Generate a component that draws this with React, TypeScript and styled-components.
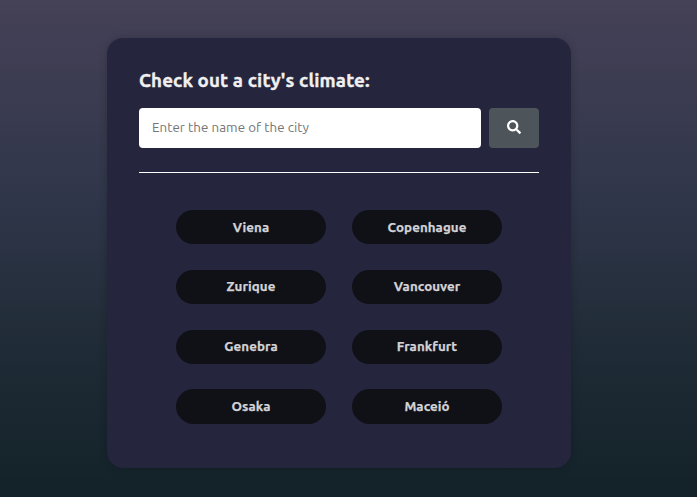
import React from "react";
import styled, { createGlobalStyle } from "styled-components";
import { FaSearch } from "react-icons/fa";

const GlobalStyle = createGlobalStyle`
  * { box-sizing: border-box; margin: 0; padding: 0; }
  body { font-family: Ubuntu, "Noto Sans", "Open Sans", sans-serif; }
`;

const Page = styled.main`
  height: 497px;
  padding: 38px 126px 29px 107px;
  background: linear-gradient(to bottom, #454157, #30364a 40%, #1f2b36 70%, #132229);
`;

const Card = styled.section`
  width: 464px;
  height: 430px;
  padding: 32px;
  border-radius: 16px;
  background: #25253d;
  box-shadow: 0 0 8px rgba(0, 0, 0, 0.2);
`;

const Title = styled.h1`
  height: 22px;
  line-height: 21px;
  font-size: 18.72px;
  font-weight: 700;
  letter-spacing: 0.14px;
  -webkit-text-stroke: 0.35px #f0f0f0;
  color: #f0f0f0;
  white-space: nowrap;
`;

const SearchForm = styled.form`
  display: flex;
  gap: 8px;
  margin-top: 16px;
  padding-bottom: 24px;
  border-bottom: 1px solid #fff;
`;

const CityInput = styled.input`
  width: 342px;
  height: 40px;
  padding: 0 13px 1px;
  border: 0;
  border-radius: 4px;
  background: #fff;
  font: 13.333px Ubuntu, "Noto Sans", sans-serif;
  letter-spacing: 0.05px;
  &::placeholder { color: #757575; opacity: 1; }
`;

const SearchButton = styled.button`
  display: grid;
  place-items: center;
  width: 50px;
  height: 40px;
  padding-bottom: 2px;
  border: 0;
  border-radius: 4px;
  background: #4d545a;
  color: #fff;
  font-size: 14px;
`;

const Cities = styled.div`
  display: grid;
  grid-template-columns: 150px 150px;
  gap: 25.6px 26px;
  justify-content: center;
  margin-top: 37px;
`;

const City = styled.button`
  height: 34.2px;
  padding-bottom: 0.1px;
  border: 0;
  border-radius: 18px;
  background: #101116;
  color: #d3d3d7;
  font: 700 13.333px/15px Ubuntu, "Noto Sans", sans-serif;
  letter-spacing: 0.07px;
  -webkit-text-stroke: 0.25px #d3d3d7;
`;

const cities = ["Viena", "Copenhague", "Zurique", "Vancouver", "Genebra", "Frankfurt", "Osaka", "Maceió"];

export default function App() {
  return (
    <Page>
      <GlobalStyle />
      <Card>
        <Title>Check out a city's climate:</Title>
        <SearchForm onSubmit={(e) => e.preventDefault()}>
          <CityInput placeholder="Enter the name of the city" />
          <SearchButton aria-label="Search"><FaSearch /></SearchButton>
        </SearchForm>
        <Cities>
          {cities.map((city) => <City key={city}>{city}</City>)}
        </Cities>
      </Card>
    </Page>
  );
}
